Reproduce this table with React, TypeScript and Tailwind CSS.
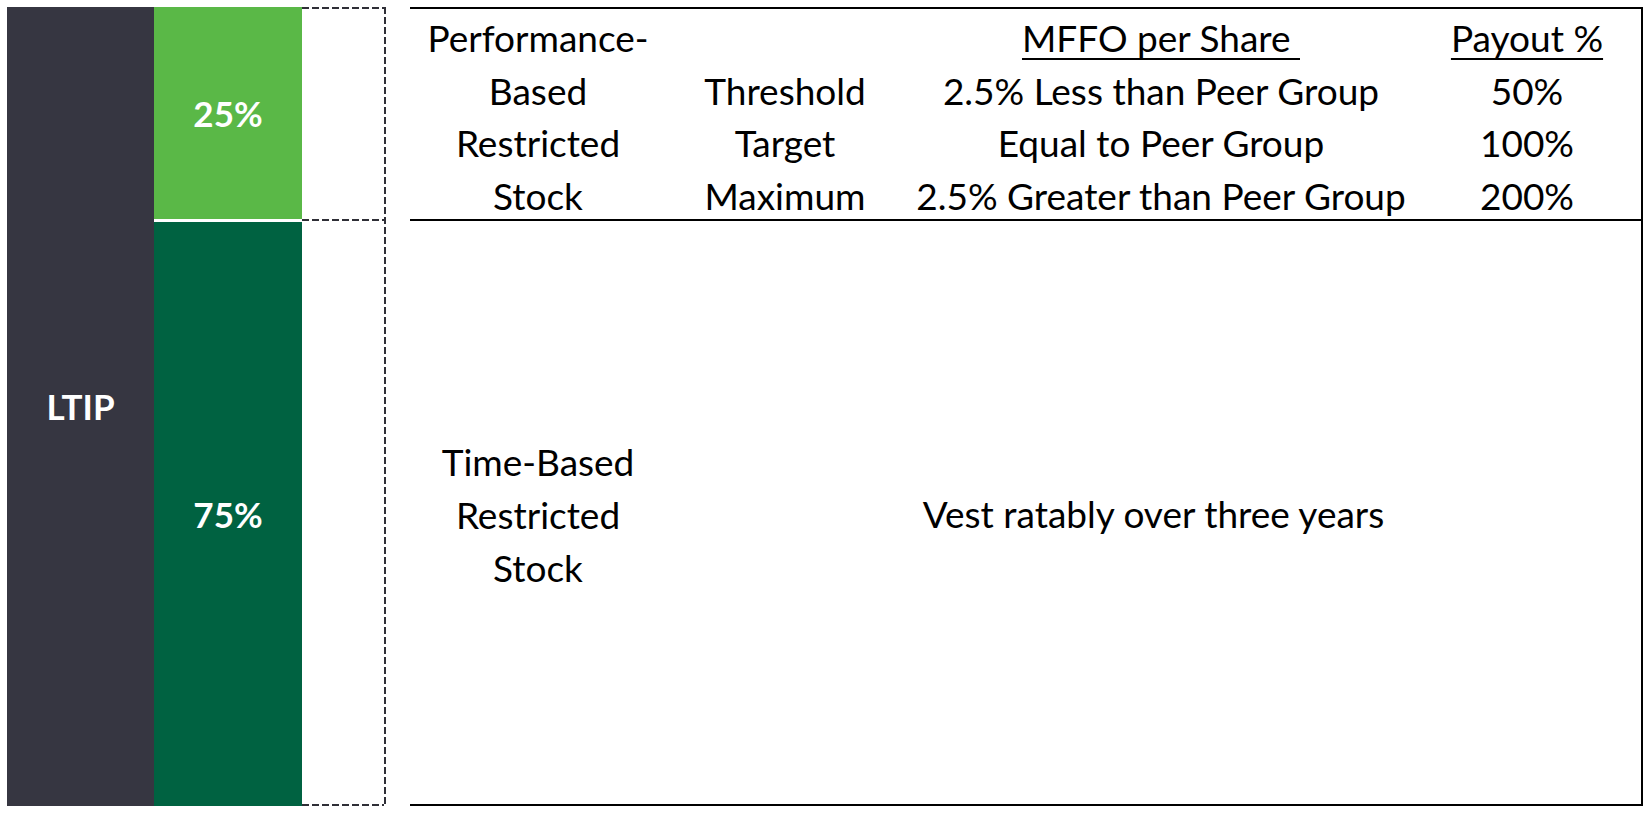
import React from "react";

const font = { fontFamily: "Lato, 'Noto Sans', sans-serif" };

function Cell({ children }: { children: React.ReactNode }) {
  return <div className="flex justify-center whitespace-nowrap">{children}</div>;
}

function HDash() {
  return (
    <div className="h-[2px] bg-[repeating-linear-gradient(to_right,#2f2f37_0px,#2f2f37_7px,transparent_7px,transparent_10px)]" />
  );
}

export default function App() {
  return (
    <div className="w-[1650px] h-[816px] bg-white text-black" style={font}>
      <div className="flex pl-[7px] pt-[7px]">
        {/* LTIP column */}
        <div className="w-[147px] h-[799px] bg-[#363641] flex items-center justify-center text-white font-bold text-[35px]">
          LTIP
        </div>
        {/* Green allocation column */}
        <div className="w-[148px] h-[799px] flex flex-col">
          <div className="h-[212px] bg-[#5ab847] flex items-center justify-center text-white font-bold text-[35px]">25%</div>
          <div className="h-[3px] bg-white" />
          <div className="flex-1 bg-[#006241] flex items-center justify-center text-white font-bold text-[35px]">75%</div>
        </div>
        {/* Dashed column */}
        <div className="w-[84px] h-[799px] flex">
          <div className="flex-1 flex flex-col">
            <HDash />
            <div className="h-[210px]" />
            <HDash />
            <div className="flex-1" />
            <HDash />
          </div>
          <div className="w-[2px] bg-[repeating-linear-gradient(to_bottom,#2f2f37_0px,#2f2f37_7px,transparent_7px,transparent_10px)]" />
        </div>
        {/* Table */}
        <div className="ml-[24px] w-[1233px] h-[799px] border-t-2 border-r-2 border-b-2 border-black flex flex-col text-[37px] leading-[52.5px]">
          <div className="h-[210px] pt-[3px] grid grid-cols-[256px_238px_514px_218px]">
            <div className="flex flex-col">
              <Cell>Performance-</Cell>
              <Cell>Based</Cell>
              <Cell>Restricted</Cell>
              <Cell>Stock</Cell>
            </div>
            <div className="flex flex-col">
              <Cell>&nbsp;</Cell>
              <Cell>Threshold</Cell>
              <Cell>Target</Cell>
              <Cell>Maximum</Cell>
            </div>
            <div className="flex flex-col">
              <Cell>
                <span className="underline decoration-2 underline-offset-[6px]">MFFO per Share&nbsp;</span>
              </Cell>
              <Cell>2.5% Less than Peer Group</Cell>
              <Cell>Equal to Peer Group</Cell>
              <Cell>2.5% Greater than Peer Group</Cell>
            </div>
            <div className="flex flex-col">
              <Cell>
                <span className="underline decoration-2 underline-offset-[6px]">Payout %</span>
              </Cell>
              <Cell>50%</Cell>
              <Cell>100%</Cell>
              <Cell>200%</Cell>
            </div>
          </div>
          <div className="h-[2px] bg-black" />
          <div className="flex-1 grid grid-cols-[256px_1fr] pt-[4px]">
            <div className="flex flex-col justify-center leading-[53px]">
              <Cell>Time-Based</Cell>
              <Cell>Restricted</Cell>
              <Cell>Stock</Cell>
            </div>
            <div className="flex items-center justify-center whitespace-nowrap">
              Vest ratably over three years
            </div>
          </div>
        </div>
      </div>
    </div>
  );
}
